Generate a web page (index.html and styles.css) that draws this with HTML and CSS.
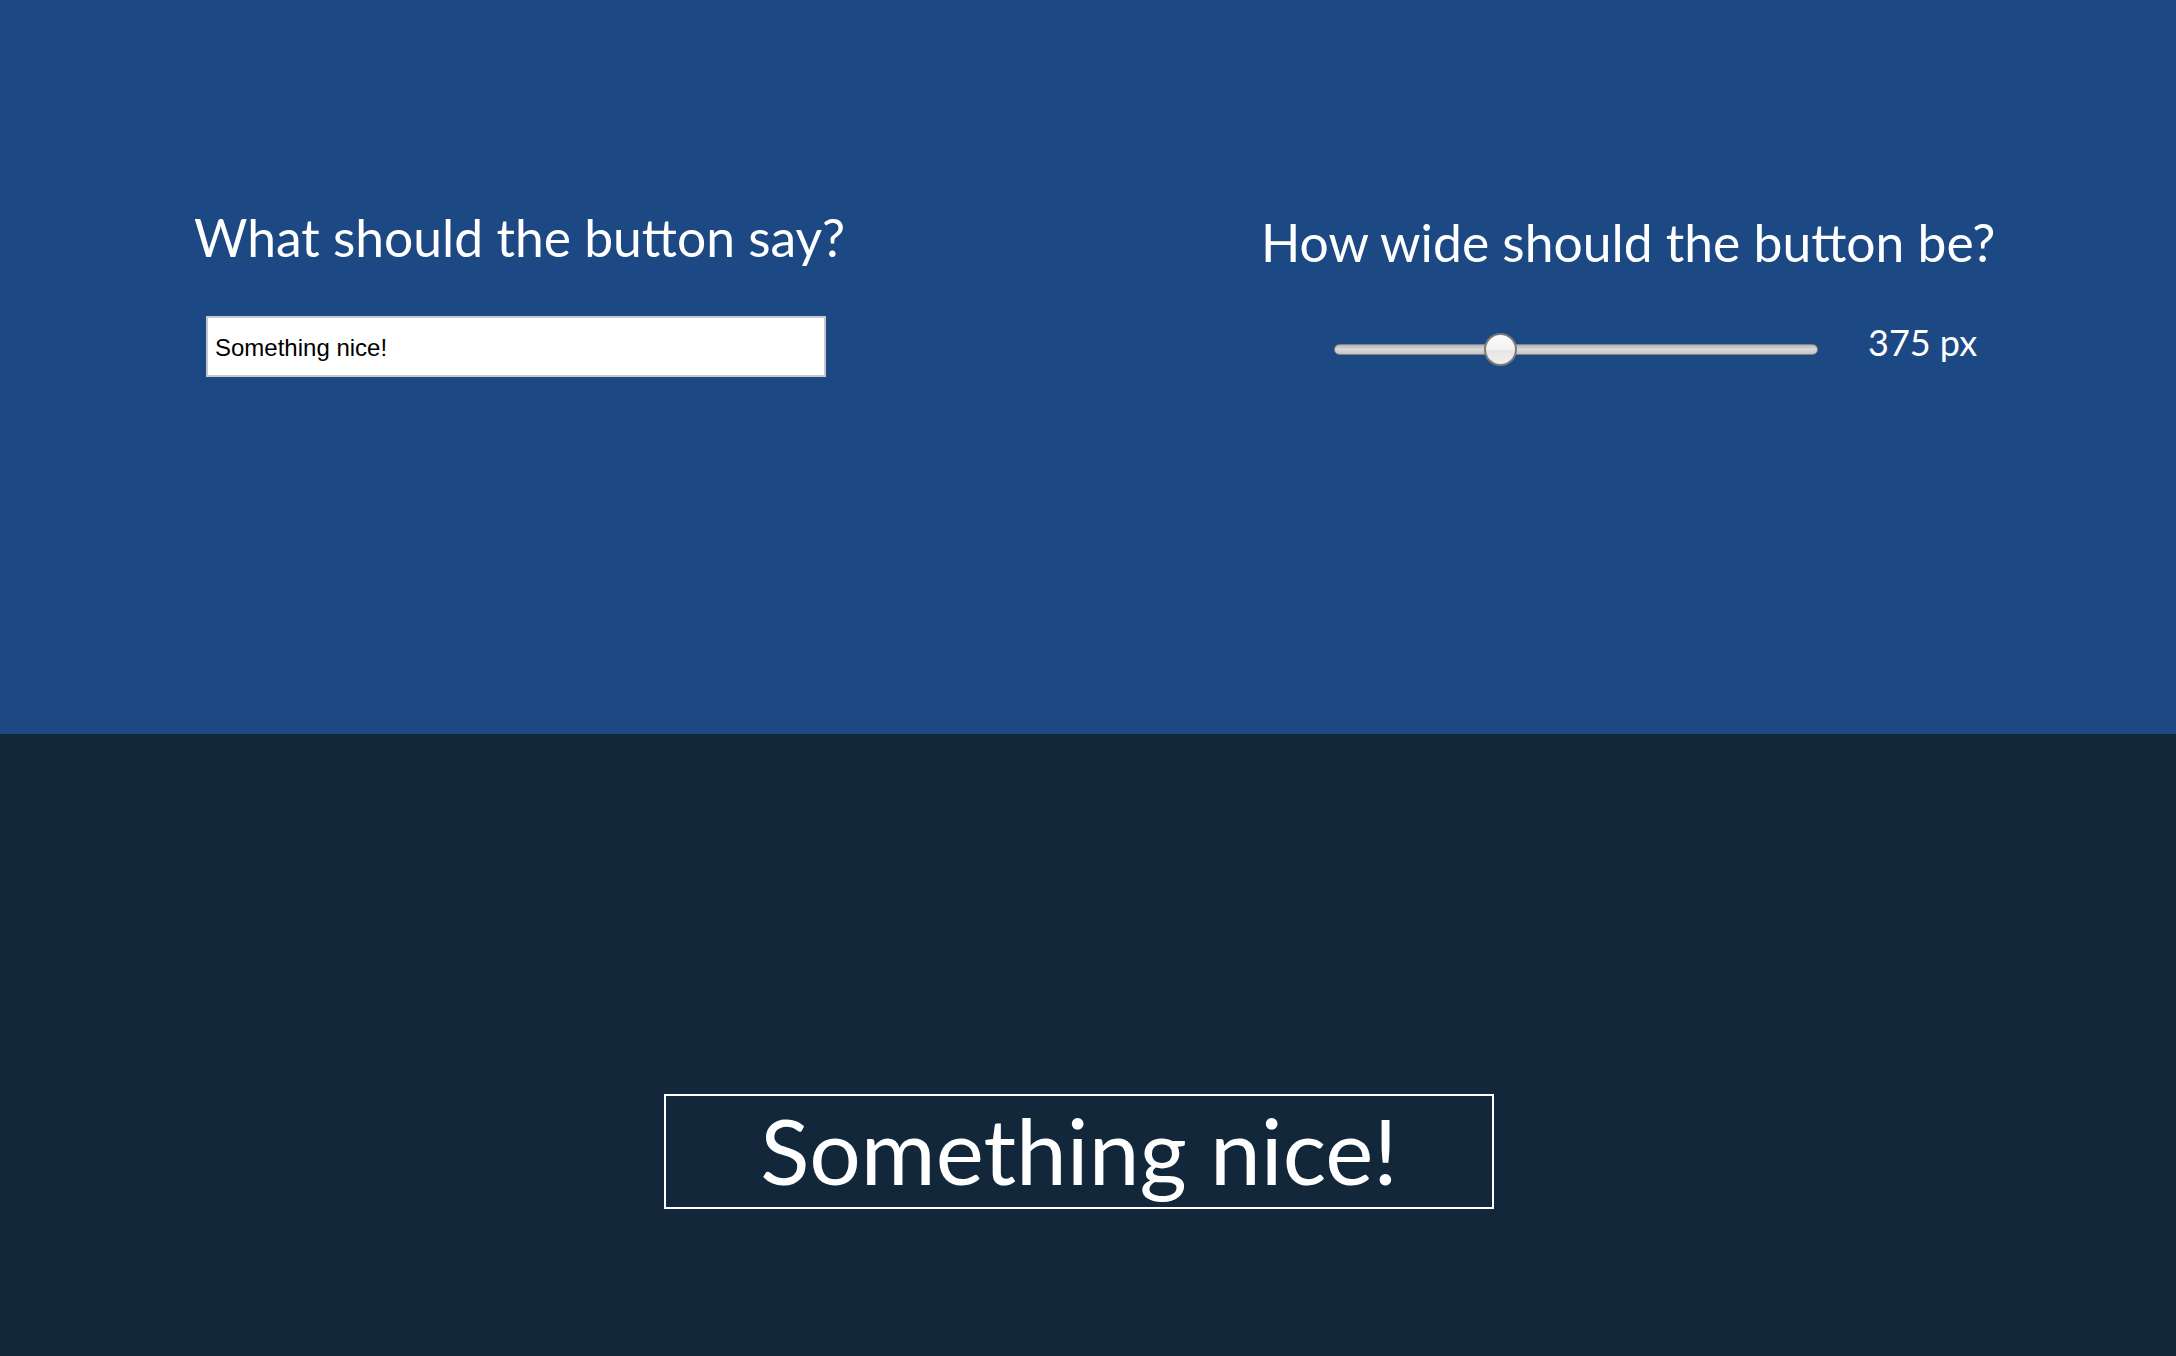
FILE: index.html
```html
<!DOCTYPE html>
<html lang="en">
<head>
<meta charset="utf-8">
<title>Button builder</title>
<link rel="stylesheet" href="styles.css">
</head>
<body>
<section class="controls">
  <div class="control control-text">
    <h2 class="control-title">What should the button say?</h2>
    <input class="text-input" type="text" value="Something nice!">
  </div>
  <div class="control control-width">
    <h2 class="control-title title-width">How wide should the button be?</h2>
    <div class="slider-row">
      <input class="width-slider" type="range" min="0" max="1130" value="375">
      <span class="slider-value">375 px</span>
    </div>
  </div>
</section>
<section class="preview">
  <button class="preview-button" type="button">Something nice!</button>
</section>
</body>
</html>
```

FILE: styles.css
```css
html, body {
  margin: 0;
  padding: 0;
}

body {
  width: 2176px;
  height: 1356px;
  overflow: hidden;
  font-family: "Lato", "Open Sans", "Liberation Sans", sans-serif;
  color: #ffffff;
  display: flex;
  flex-direction: column;
}

.controls {
  height: 734px;
  flex: none;
  background: #1c4884;
  display: flex;
  padding-left: 194px;
  box-sizing: border-box;
}

.control {
  display: flex;
  flex-direction: column;
}

.control-text {
  width: 1067px;
}

.control-title {
  margin: 0;
  font-weight: 400;
  font-size: 51.6px;
  line-height: 1;
  padding-top: 212px;
  white-space: nowrap;
}

.title-width {
  padding-top: 217px;
}

.text-input {
  margin: 52px 0 0 12px;
  width: 620px;
  height: 61px;
  box-sizing: border-box;
  border: 2px solid #c6c8cc;
  background: #ffffff;
  padding: 3px 0 0 7px;
  font-family: "Liberation Sans", Arial, sans-serif;
  font-size: 24px;
  color: #000000;
  outline: none;
}

.slider-row {
  display: flex;
  align-items: center;
  margin: 64px 0 0 73px;
  height: 34px;
}

.width-slider {
  -webkit-appearance: none;
  appearance: none;
  width: 484px;
  height: 34px;
  margin: 0;
  background: transparent;
}

.width-slider::-webkit-slider-runnable-track {
  height: 11px;
  box-sizing: border-box;
  border: 1px solid #858585;
  border-radius: 6px;
  background: linear-gradient(#b5b5b5, #dadada 50%, #c2c2c2);
}

.width-slider::-webkit-slider-thumb {
  -webkit-appearance: none;
  appearance: none;
  width: 33px;
  height: 33px;
  margin-top: -12px;
  box-sizing: border-box;
  border: 2px solid #7a7a7a;
  border-radius: 50%;
  background: linear-gradient(#fbfbfb, #f2f2f2 50%, #e6e6e6 52%, #efefef);
}

.slider-value {
  margin-left: 50px;
  margin-bottom: 15px;
  font-size: 36px;
  line-height: 1;
}

.preview {
  flex: 1;
  background: #12283a;
  display: flex;
  justify-content: center;
  align-items: flex-start;
  padding-top: 360px;
  padding-right: 18px;
}

.preview-button {
  width: 830px;
  height: 115px;
  box-sizing: border-box;
  border: 2px solid #ffffff;
  background: transparent;
  color: #ffffff;
  font-family: "Lato", "Open Sans", "Liberation Sans", sans-serif;
  font-size: 91px;
  line-height: 1;
  padding: 0 0 5px;
  cursor: pointer;
}
```
